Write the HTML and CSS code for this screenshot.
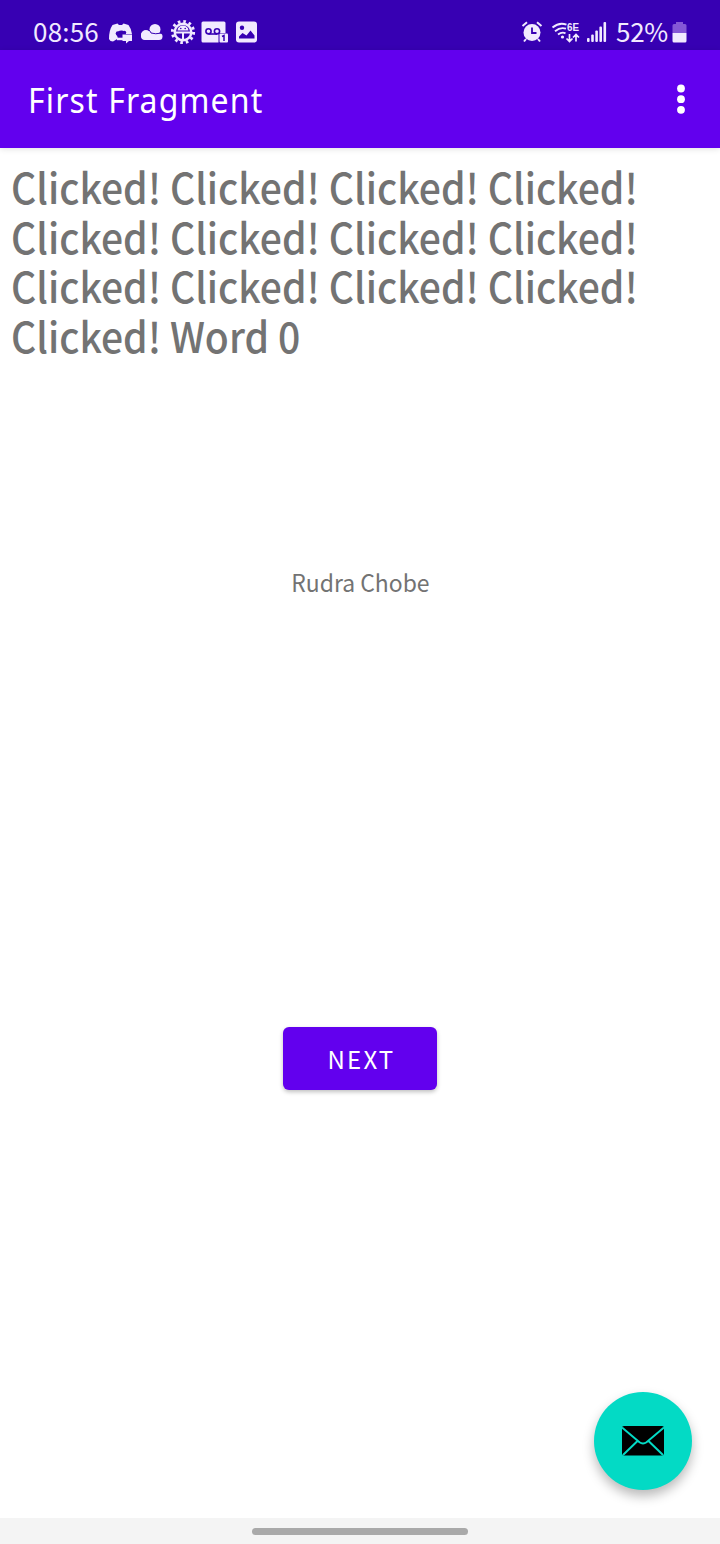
FILE: index.html
```html
<!DOCTYPE html>
<html lang="en">
<head>
<meta charset="utf-8">
<title>First Fragment</title>
<link rel="stylesheet" href="styles.css">
</head>
<body>
<div class="screen">
  <div class="status">
    <span class="clock">08:56</span>
    <svg class="notif-icons" width="152" height="28" viewBox="108 18 152 28" fill="#f1eaff">
      <path d="M109 39q0-9 3.500-14l5-1.500 1.500 1.500h3l1.500-1.500 5 1.500q3 4 3.500 9h-6q-1-3.500-4.500-3.500-4.500 0-4.500 5l1 3-5 3q-3 0-4-2.500z"/>
      <circle cx="118" cy="33.500" r="2.300" fill="#3700b3"/><circle cx="124.500" cy="32.500" r="1.700" fill="#3700b3"/><path d="M117 37.700h6.500v2.500h-6.500z"/>
      <path d="M122.500 34.500h9.500v6.500h-3l-3 2.500v-2.500h-3.500z"/>
      <circle cx="155" cy="29.500" r="5.500"/><circle cx="146" cy="35" r="5"/><rect x="141" y="31.500" width="14" height="8.500" rx="4"/><rect x="146" y="33" width="16.500" height="7" rx="3.500"/><path d="M145 29.500q5-.500 6 3.500 4 1.500 11 0" fill="none" stroke="#3700b3" stroke-width="1"/>
      <circle cx="183" cy="32" r="10.600" fill="none" stroke="#f1eaff" stroke-width="3" stroke-dasharray="2.600 2.950"/>
      <circle cx="183" cy="32" r="8.300" fill="none" stroke="#f1eaff" stroke-width="2.400"/>
      <path d="M177.500 30.500a5.500 5 0 0 1 11 0z"/><path d="M176 32.500h14M183 32v8" stroke="#f1eaff" stroke-width="2"/>
      <circle cx="180.800" cy="28.500" r=".8" fill="#3700b3"/><circle cx="185.200" cy="28.500" r=".8" fill="#3700b3"/>
      <path d="M203 21.500h21q1.500 0 1.500 1.500v10h-7v9.500h-15.500q-1.500 0-1.500-1.500v-18q0-1.500 1.500-1.500z"/>
      <g fill="none" stroke="#3700b3" stroke-width="1.600"><circle cx="208.500" cy="31.300" r="2.600"/><circle cx="217" cy="31.300" r="2.600"/><path d="M208.500 34h8.500"/></g>
      <rect x="219.500" y="33.500" width="8.500" height="9" rx="1"/><path d="M222 36.500l2-1v5.500" fill="none" stroke="#3700b3" stroke-width="1.500"/>
      <rect x="236" y="21.500" width="21" height="21" rx="3"/>
      <circle cx="242" cy="27.700" r="2.200" fill="#3700b3"/><path d="M239 38.500v-2l3.500-3.500 4 2.500 4-5 4 5v3z" fill="#3700b3"/>
    </svg>
    <svg class="system-icons" width="88" height="28" viewBox="520 18 88 28" fill="#f1eaff">
      <circle cx="532" cy="32.500" r="8.500"/><path d="M522.500 26l4.500-3.700M541.500 26l-4.500-3.700M526 39l-2 2.500M538 39l2 2.500" stroke="#f1eaff" stroke-width="2" fill="none"/>
      <path d="M532 27.500v5.500h4.500" stroke="#3700b3" stroke-width="1.800" fill="none"/>
      <g fill="none" stroke="#f1eaff" stroke-width="1.900"><path d="M552.500 27.500q7-5.800 14-2.800M555 31.200q5.500-4.500 11-2.500M558 34.500q4-3 7.500-1.200"/></g><circle cx="562.500" cy="37" r="1.600"/>
      <text class="wifi-label" x="567" y="31" textLength="12" lengthAdjust="spacingAndGlyphs">6E</text>
      <path d="M569.500 34v7M566.500 38.500l3 3 3-3M576 41.500v-7M573 37.500l3-3 3 3" fill="none" stroke="#f1eaff" stroke-width="1.700"/>
      <rect x="587" y="38" width="2.600" height="4" rx="1"/><rect x="591.200" y="34.500" width="2.600" height="7.500" rx="1"/><rect x="595.300" y="30.500" width="2.600" height="11.500" rx="1"/><rect x="599.400" y="26.500" width="2.600" height="15.500" rx="1"/><rect x="603.500" y="22" width="2.600" height="20" rx="1"/>
    </svg>
    <span class="percent">52%</span>
    <svg class="battery" width="16" height="24" viewBox="0 0 16 24"><path d="M4 3V1h7v2h2q1.500 0 1.500 1.500V12H.500V4.500Q.500 3 2 3z" fill="#8557d6"/><path d="M.500 12h14v8q0 1.500-1.500 1.500H2Q.500 21.500.500 20z" fill="#f1eaff"/></svg>
  </div>
  <header class="toolbar">
    <h1 class="title">First Fragment</h1>
    <svg class="more" width="10" height="32" viewBox="0 0 10 32" fill="#fff"><circle cx="5" cy="5.500" r="3.900"/><circle cx="5" cy="16.200" r="3.900"/><circle cx="5" cy="26.800" r="3.900"/></svg>
  </header>
  <main class="content">
    <p class="clicks">Clicked! Clicked! Clicked! Clicked!<br>Clicked! Clicked! Clicked! Clicked!<br>Clicked! Clicked! Clicked! Clicked!<br>Clicked! Word 0</p>
    <p class="name">Rudra Chobe</p>
    <button class="next">NEXT</button>
    <button class="fab" aria-label="Email">
      <svg width="42" height="30" viewBox="0 0 42 30"><rect width="42" height="29.500" rx="2"/><path d="M0 1.500l17.500 14.700q3.500 2.500 7 0L42 1.500M1 29l14.500-14M41 29L26.500 15" fill="none" stroke="#03dac5" stroke-width="2"/></svg>
    </button>
  </main>
  <nav class="navbar"><div class="handle"></div></nav>
</div>
</body>
</html>
```
FILE: styles.css
```css
* { box-sizing: border-box; }
body { margin: 0; background: #fff; font-family: "Noto Sans CJK SC", "Noto Sans", sans-serif; }
h1, p { margin: 0; font-weight: 400; }
button { border: 0; padding: 0; font: inherit; }
svg { display: block; flex: none; }
.screen { width: 720px; height: 1544px; display: flex; flex-direction: column; overflow: hidden; }
.status { height: 50px; flex: none; display: flex; align-items: flex-start; padding: 18px 32px 0 33px; background: #3700b3; color: #f1eaff; }
.clock { width: 75px; font-size: 26px; line-height: 26px; letter-spacing: .2px; white-space: nowrap; }
.system-icons { margin-left: auto; margin-right: 1px; }
.wifi-label { font: 700 11.500px "Liberation Sans", sans-serif; }
.percent { width: 64px; padding-left: 7px; font-size: 26px; line-height: 26px; letter-spacing: -.3px; white-space: nowrap; }
.battery { margin: 3px 0 0 -1px; }
.toolbar { position: relative; z-index: 1; height: 98px; flex: none; display: flex; align-items: center; justify-content: space-between; padding: 0 34px 0 28px; background: #6200ee; color: #fff; box-shadow: 0 1px 6px rgba(0,0,0,.12); }
.title { padding-top: 2px; font-family: "Noto Sans", sans-serif; font-size: 34px; line-height: 40px; letter-spacing: 1.2px; white-space: nowrap; transform: scaleX(.942); transform-origin: left; }
.content { position: relative; flex: 1; display: flex; flex-direction: column; align-items: center; }
.clicks { align-self: stretch; height: 206px; padding: 13px 0 0 11px; color: #737373; font-size: 42px; line-height: 49.6px; font-weight: 500; white-space: nowrap; transform: scaleX(.931); transform-origin: 11px 0; }
.name { margin-top: 210px; height: 39px; color: #737373; font-size: 24px; line-height: 36px; transform: scaleX(.955); }
.next { margin-top: 423.500px; width: 154px; height: 63px; flex: none; border-radius: 6px; background: #6200ee; color: #fff; font-size: 24px; line-height: 63px; padding: 0 0 0 3px; letter-spacing: 2.2px; box-shadow: 0 2px 4px rgba(0,0,0,.25); }
.fab { position: absolute; right: 28px; bottom: 28px; width: 98px; height: 98px; border-radius: 50%; display: flex; align-items: center; justify-content: center; background: #03dac5; box-shadow: 0 6px 12px rgba(0,0,0,.28); }
.navbar { height: 26px; flex: none; display: flex; justify-content: center; align-items: center; background: #f4f4f4; }
.handle { width: 216px; height: 7px; border-radius: 4px; background: #a9a9a9; }
```
